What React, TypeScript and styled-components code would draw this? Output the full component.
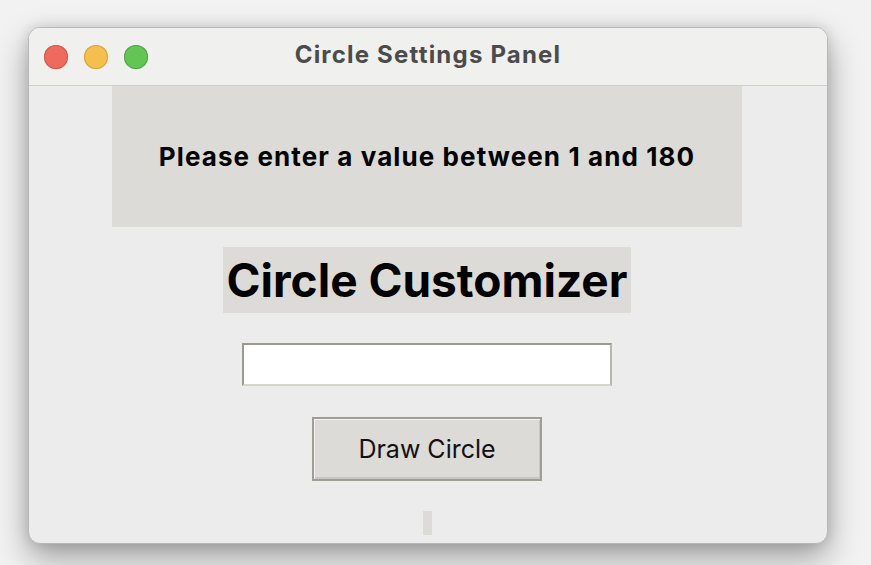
import React from "react";
import styled, { createGlobalStyle } from "styled-components";

const Global = createGlobalStyle`
  html, body { margin: 0; padding: 0; }
  body {
    width: 871px;
    height: 565px;
    overflow: hidden;
    background: #f2f2f2;
    font-family: "Inter", "Liberation Sans", sans-serif;
  }
`;

const Stage = styled.div`
  width: 871px;
  height: 565px;
  padding: 27px 0 0 28px;
  box-sizing: border-box;
`;

const Window = styled.div`
  width: 800px;
  height: 517px;
  border-radius: 12px;
  border: 1px solid #b8b8b8;
  box-sizing: border-box;
  overflow: hidden;
  background: #ececec;
  display: flex;
  flex-direction: column;
  box-shadow: 0 14px 32px rgba(0, 0, 0, 0.34), 0 0 14px rgba(0, 0, 0, 0.12);
`;

const TitleBar = styled.div`
  height: 57px;
  flex: none;
  background: #f0f0ee;
  border-bottom: 1px solid #cfcfcd;
  display: flex;
  align-items: center;
  position: relative;
  padding-left: 15px;
  gap: 16px;
`;

const Light = styled.span<{ $c: string; $b: string }>`
  width: 24px;
  height: 24px;
  border-radius: 50%;
  background: ${(p) => p.$c};
  box-shadow: inset 0 0 0 1px ${(p) => p.$b};
`;

const Title = styled.div`
  position: absolute;
  left: 0;
  right: 0;
  top: 12px;
  text-align: center;
  font-size: 24px;
  line-height: 30px;
  font-weight: 700;
  letter-spacing: 1.2px;
  color: #4b4b4b;
  pointer-events: none;
`;

const Body = styled.div`
  flex: 1;
  display: flex;
  flex-direction: column;
  align-items: center;
  padding-right: 2px;
`;

const Message = styled.div`
  width: 630px;
  height: 141px;
  background: #dcdbd7;
  display: flex;
  align-items: center;
  justify-content: center;
  font-size: 26px;
  letter-spacing: 1.1px;
  font-weight: 700;
  color: #000;
`;

const Heading = styled.div`
  margin-top: 20px;
  width: 408px;
  height: 66px;
  background: #dcdbd7;
  display: flex;
  align-items: center;
  justify-content: center;
  font-size: 46px;
  font-weight: 700;
  color: #000;
`;

const Input = styled.input`
  margin-top: 30px;
  width: 370px;
  height: 43px;
  box-sizing: border-box;
  background: #fff;
  border: 2px solid;
  border-color: #9c9990 #b9b6ae #d6d4cd #9c9990;
  outline: none;
  padding: 0 6px;
  font-size: 20px;
  font-family: inherit;
`;

const Button = styled.button`
  margin-top: 31px;
  width: 230px;
  height: 64px;
  box-sizing: border-box;
  background: #dcdbd7;
  border: 2px solid #a09e94;
  box-shadow: inset 1px 1px 0 #f2f1ee, inset -1px -2px 0 #c8c6bf;
  font-size: 25px;
  font-family: inherit;
  font-weight: 400;
  color: #111;
  padding: 0;
`;

const Bar = styled.div`
  margin-top: 30px;
  width: 9px;
  height: 24px;
  background: #dcdbd7;
`;

export default function App() {
  return (
    <>
      <Global />
      <Stage>
        <Window>
          <TitleBar>
            <Light $c="#ee6a5f" $b="#d5554b" />
            <Light $c="#f5bf4f" $b="#d9a23a" />
            <Light $c="#62c554" $b="#4fa840" />
            <Title>Circle Settings Panel</Title>
          </TitleBar>
          <Body>
            <Message>Please enter a value between 1 and 180</Message>
            <Heading>Circle Customizer</Heading>
            <Input type="text" />
            <Button>Draw Circle</Button>
            <Bar />
          </Body>
        </Window>
      </Stage>
    </>
  );
}
